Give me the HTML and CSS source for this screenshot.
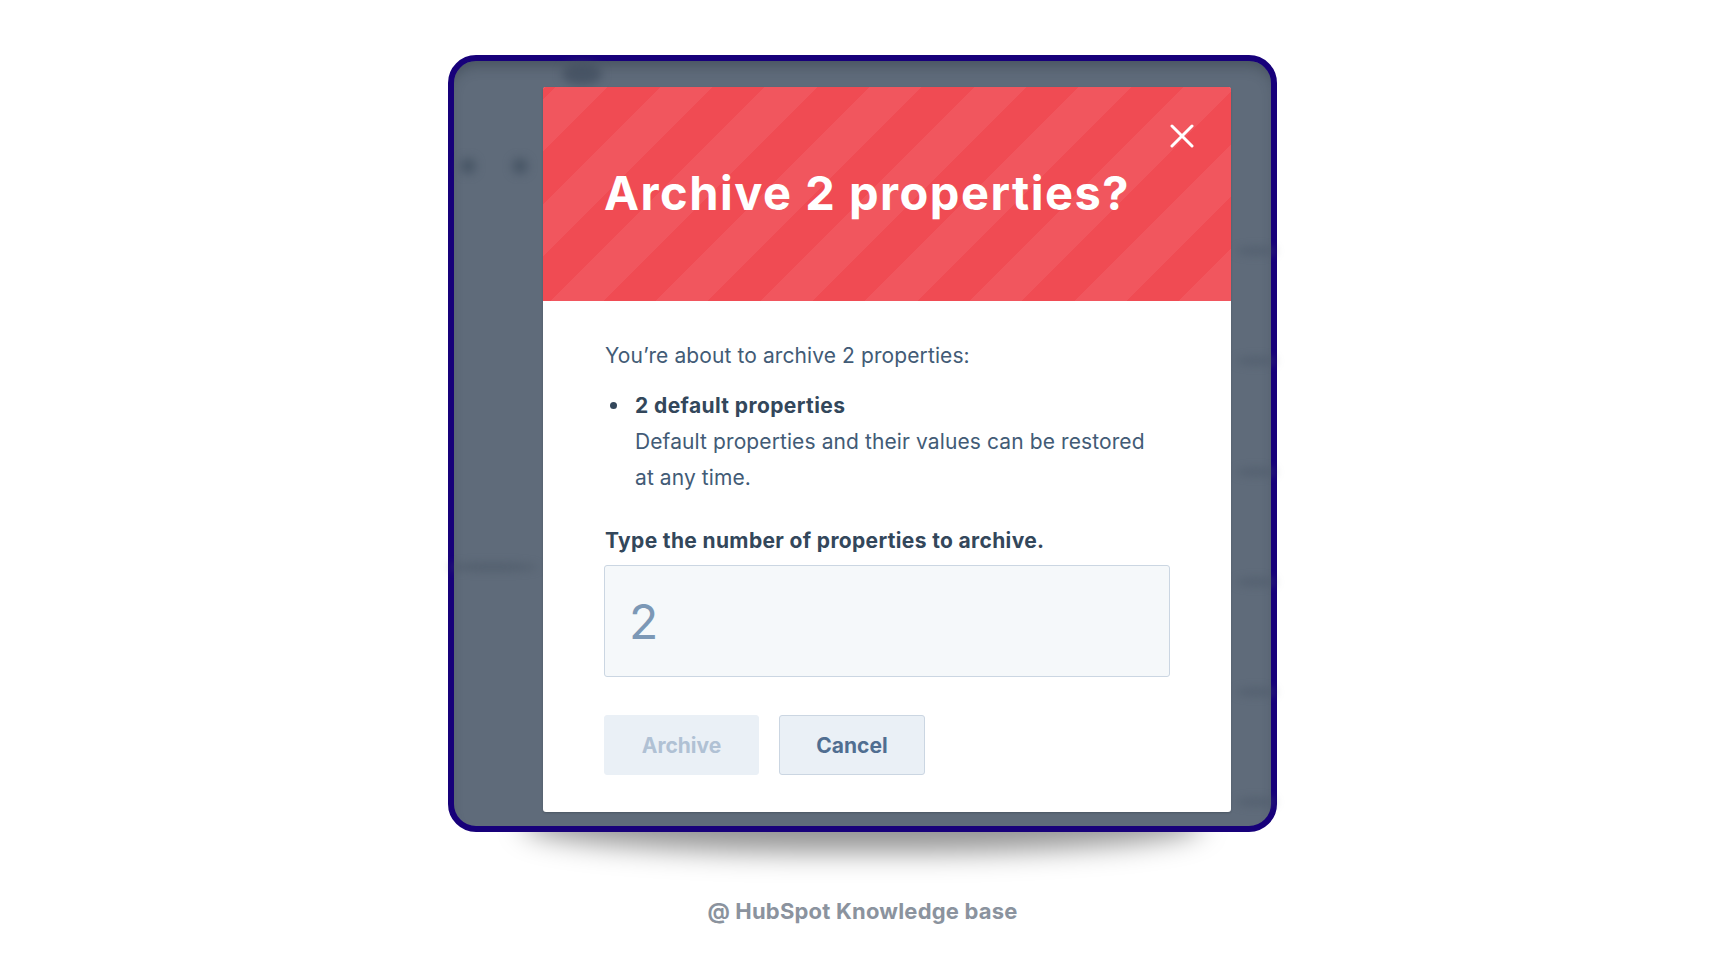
FILE: index.html
```html
<!DOCTYPE html>
<html lang="en">
<head>
<meta charset="utf-8">
<title>Archive 2 properties?</title>
<link rel="stylesheet" href="styles.css">
</head>
<body>
<main class="stage">
  <div class="frame">
    <div class="blur blur-top"></div>
    <div class="blur blur-dot blur-dot-1"></div>
    <div class="blur blur-dot blur-dot-2"></div>
    <div class="blur blur-left"></div>
    <div class="blur blur-right r1"></div>
    <div class="blur blur-right r2"></div>
    <div class="blur blur-right r3"></div>
    <div class="blur blur-right r4"></div>
    <div class="blur blur-right r5"></div>
    <div class="blur blur-right r6"></div>

    <section class="modal" role="dialog" aria-labelledby="modal-title">
      <header class="modal-header">
        <h1 id="modal-title" class="modal-title">Archive 2 properties?</h1>
        <button class="close" type="button" aria-label="Close">
          <svg viewBox="0 0 24 24" width="24" height="24" aria-hidden="true">
            <path d="M2 2 L22 22 M22 2 L2 22" stroke="#ffffff" stroke-width="3" stroke-linecap="round" fill="none"/>
          </svg>
        </button>
      </header>
      <div class="modal-body">
        <p class="intro">You’re about to archive 2 properties:</p>
        <ul class="items">
          <li class="item">
            <span class="item-title">2 default properties</span>
            <span class="item-desc">Default properties and their values can be restored at any time.</span>
          </li>
        </ul>
        <label class="field-label" for="count">Type the number of properties to archive.</label>
        <input id="count" class="field-input" type="text" value="2" readonly>
        <div class="actions">
          <button class="btn btn-archive" type="button" disabled>Archive</button>
          <button class="btn btn-cancel" type="button">Cancel</button>
        </div>
      </div>
    </section>
  </div>
  <p class="caption">@ HubSpot Knowledge base</p>
</main>
</body>
</html>
```
FILE: styles.css
```css
* { box-sizing: border-box; }

html, body {
  margin: 0;
  padding: 0;
}

body {
  background: #ffffff;
  font-family: "Inter", "Liberation Sans", sans-serif;
  color: #33475b;
}

.stage {
  display: flex;
  flex-direction: column;
  align-items: center;
  padding-top: 55px;
}

.frame {
  position: relative;
  width: 829px;
  border: 6px solid #17007a;
  border-radius: 28px;
  background: #5f6b7a;
  box-shadow: inset 0 10px 14px -6px rgba(40, 50, 62, 0.45);
  padding: 26px 40px 14px 89px;
  display: flex;
}

.frame::after {
  content: "";
  position: absolute;
  left: 70px;
  right: 70px;
  bottom: -26px;
  height: 60px;
  border-radius: 45%;
  background: rgba(0, 0, 0, 0.42);
  filter: blur(14px);
  z-index: -1;
}

.blur {
  position: absolute;
  background: rgba(62, 76, 92, 0.7);
  filter: blur(5px);
  border-radius: 50%;
}
.blur-top { left: 108px; top: 2px; width: 40px; height: 22px; }
.blur-dot { top: 97px; width: 16px; height: 16px; background: rgba(66, 80, 96, 0.75); }
.blur-dot-1 { left: 6px; }
.blur-dot-2 { left: 58px; }
.blur-left { left: -6px; top: 502px; width: 90px; height: 8px; background: rgba(72, 85, 100, 0.55); filter: blur(4px); }
.blur-right { left: 782px; width: 40px; height: 8px; background: rgba(75, 88, 103, 0.55); filter: blur(4px); }
.r1 { top: 186px; }
.r2 { top: 296px; }
.r3 { top: 407px; }
.r4 { top: 517px; }
.r5 { top: 627px; }
.r6 { top: 737px; }

.modal {
  position: relative;
  width: 688px;
  background: #ffffff;
  border-radius: 3px;
  overflow: hidden;
  box-shadow: 0 1px 2px rgba(20, 30, 40, 0.25);
}

.modal-header {
  position: relative;
  height: 214px;
  padding: 77px 62px 0 61px;
  background-color: #f04b53;
  background-image: repeating-linear-gradient(
    -45deg,
    #f1565e 0px,
    #f1565e 37px,
    #f04b53 37px,
    #f04b53 74px
  );
}

.modal-title {
  margin: 0;
  font-size: 47px;
  line-height: 58px;
  font-weight: 700;
  color: #ffffff;
  letter-spacing: 1.5px;
}

.close {
  position: absolute;
  top: 37px;
  right: 37px;
  width: 24px;
  height: 24px;
  padding: 0;
  border: 0;
  background: transparent;
  display: flex;
}

.modal-body {
  padding: 38px 61px 37px 62px;
  display: flex;
  flex-direction: column;
  align-items: flex-start;
}

.intro {
  margin: 0 0 15px;
  font-size: 21px;
  line-height: 34px;
  letter-spacing: 0.1px;
  color: #425b76;
}

.items {
  margin: 0 0 28px;
  padding: 0;
  list-style: none;
}

.item {
  position: relative;
  padding-left: 30px;
  display: flex;
  flex-direction: column;
}

.item::before {
  content: "";
  position: absolute;
  left: 5px;
  top: 14px;
  width: 7px;
  height: 7px;
  border-radius: 50%;
  background: #33475b;
}

.item-title {
  font-size: 21px;
  line-height: 36px;
  font-weight: 700;
  letter-spacing: 0.4px;
  color: #33475b;
}

.item-desc {
  font-size: 21px;
  line-height: 36px;
  letter-spacing: 0.1px;
  color: #425b76;
  max-width: 522px;
}

.field-label {
  display: block;
  margin-bottom: 7px;
  font-size: 21px;
  line-height: 34px;
  font-weight: 700;
  letter-spacing: 0.35px;
  color: #33475b;
}

.field-input {
  display: block;
  width: 566px;
  height: 112px;
  margin: 0 0 38px -1px;
  padding: 0 24px;
  border: 1px solid #cbd6e2;
  border-radius: 3px;
  background: #f5f8fa;
  font-family: "Inter", "Liberation Sans", sans-serif;
  font-size: 48px;
  color: #7c98b6;
  outline: none;
}

.actions {
  display: flex;
  gap: 20px;
  margin-left: -1px;
}

.btn {
  height: 60px;
  border-radius: 3px;
  font-family: "Inter", "Liberation Sans", sans-serif;
  font-size: 21px;
  font-weight: 700;
  background: #eaf0f6;
  padding: 0;
}

.btn-archive {
  width: 155px;
  border: 1px solid #eaf0f6;
  color: #b0c1d4;
}

.btn-cancel {
  width: 146px;
  border: 1px solid #cbd6e2;
  color: #506e91;
}

.caption {
  margin: 64px 0 0;
  font-size: 22px;
  line-height: 30px;
  font-weight: 700;
  letter-spacing: 0.2px;
  color: #8b939e;
}
```
